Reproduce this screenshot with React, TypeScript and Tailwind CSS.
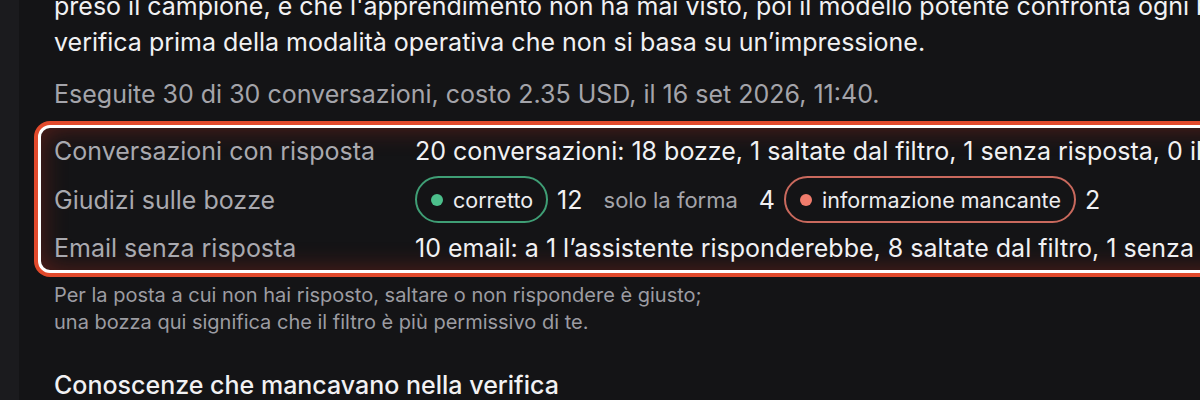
import React from "react";

const font = { fontFamily: "Inter, 'Noto Sans', sans-serif" };

function Pill({ label, dot, border }: { label: string; dot: string; border: string }) {
  return (
    <span
      className={`inline-flex h-[47px] items-center gap-[10px] rounded-full border-2 pl-[14px] pr-[13px] text-[21.5px] text-[#ececef] ${border}`}
    >
      <span className={`h-[12px] w-[12px] rounded-full ${dot}`} />
      {label}
    </span>
  );
}

export default function App() {
  return (
    <div className="flex h-[400px] w-[1200px] overflow-hidden bg-[#141416]" style={font}>
      {/* sidebar edge */}
      <div className="w-[19px] shrink-0 bg-[#1b1b1e]" />

      <div className="flex min-w-0 flex-1 flex-col pl-[35px]">
        <p className="mt-[-12px] whitespace-nowrap text-[25px] leading-[36px] text-[#f1f1f3]">
          preso il campione, e che l'apprendimento non ha mai visto, poi il modello potente confronta ogni bozza
          <br />
          verifica prima della modalità operativa che non si basa su un’impressione.
        </p>

        <p className="mt-[16px] whitespace-nowrap text-[25px] leading-[36px] text-[#a4a4aa]">
          Eseguite 30 di 30 conversazioni, costo 2.35 USD, il 16 set 2026, 11:40.
        </p>

        {/* highlighted summary */}
        <div className="ml-[-16px] mt-[13px] h-[148px] w-[1200px] shrink-0 rounded-[12px] border-[3px] border-white bg-[#141416] pl-[13px] pt-[5px] shadow-[0_0_0_4px_#e24a2c,inset_0_0_26px_rgba(170,45,30,0.45)]">
          <div className="grid grid-cols-[361px_1fr] items-center gap-y-[7px] whitespace-nowrap text-[25px] leading-[36px]">
            <div className="text-[#a9a9af]">Conversazioni con risposta</div>
            <div className="text-[#f1f1f3]">
              20 conversazioni: 18 bozze, 1 saltate dal filtro, 1 senza risposta, 0 illeggibili
            </div>

            <div className="text-[#a9a9af]">Giudizi sulle bozze</div>
            <div className="flex items-center text-[#f1f1f3]">
              <Pill label="corretto" dot="bg-[#4cbf8b]" border="border-[#3f9e75]" />
              <span className="ml-[9px]">12</span>
              <span className="ml-[21px] text-[22px] text-[#a4a4aa]">solo la forma</span>
              <span className="ml-[21px]">4</span>
              <span className="ml-[9px]">
                <Pill label="informazione mancante" dot="bg-[#f07c6c]" border="border-[#c9695d]" />
              </span>
              <span className="ml-[9px]">2</span>
            </div>

            <div className="text-[#a9a9af]">Email senza risposta</div>
            <div className="text-[#f1f1f3]">
              10 email: a 1 l’assistente risponderebbe, 8 saltate dal filtro, 1 senza risposta
            </div>
          </div>
        </div>

        <p className="mt-[9px] whitespace-nowrap text-[20px] leading-[27px] text-[#9c9ca2]">
          Per la posta a cui non hai risposto, saltare o non rispondere è giusto;
          <br />
          una bozza qui significa che il filtro è più permissivo di te.
        </p>

        <h3 className="mt-[33px] whitespace-nowrap text-[25px] font-medium leading-[32px] text-[#f1f1f3]">
          Conoscenze che mancavano nella verifica
        </h3>
      </div>
    </div>
  );
}
